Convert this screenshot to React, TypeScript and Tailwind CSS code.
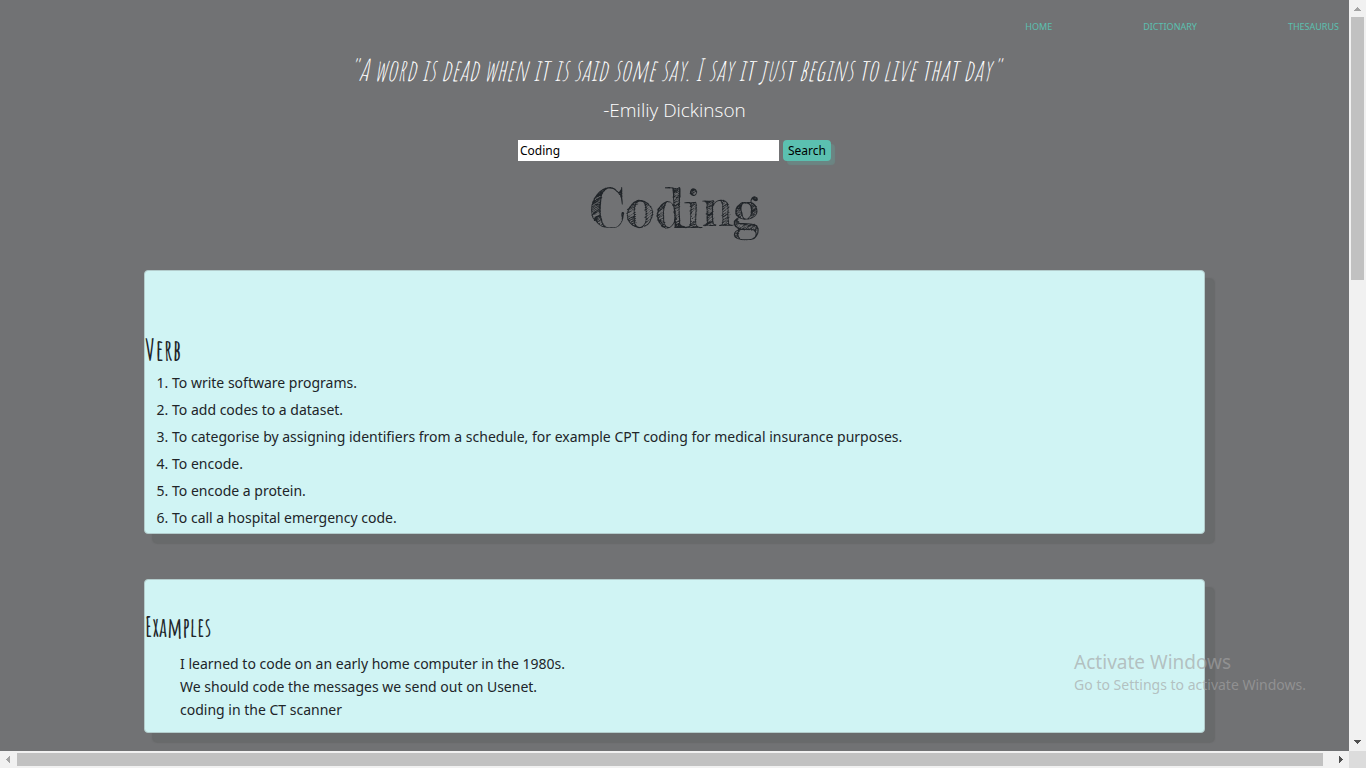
import React from "react";

const links = ["Home", "Dictionary", "Thesaurus"];

const definitions = [
  "To write software programs.",
  "To add codes to a dataset.",
  "To categorise by assigning identifiers from a schedule, for example CPT coding for medical insurance purposes.",
  "To encode.",
  "To encode a protein.",
  "To call a hospital emergency code.",
];

const examples = [
  "I learned to code on an early home computer in the 1980s.",
  "We should code the messages we send out on Usenet.",
  "coding in the CT scanner",
];

function Arrow({ points, className }: { points: string; className: string }) {
  return (
    <svg viewBox="0 0 17 17" className={`size-[17px] shrink-0 ${className}`} aria-hidden="true">
      <polygon points={points} fill="currentColor" shapeRendering="crispEdges" />
    </svg>
  );
}

function VerticalScrollbar() {
  return (
    <div className="flex flex-col bg-[#f1f1f1]" aria-hidden="true">
      <Arrow points="5,11 12,11 8.5,7" className="text-[#a3a3a3]" />
      <div className="min-h-0 flex-1 px-0.5">
        <div className="h-[36.7%] bg-[#c1c1c1]" />
      </div>
      <Arrow points="5,6 12,6 8.5,10" className="text-[#505050]" />
    </div>
  );
}

function HorizontalScrollbar() {
  return (
    <div className="flex bg-[#f1f1f1]" aria-hidden="true">
      <Arrow points="10,5 10,12 6,8.5" className="text-[#a3a3a3]" />
      <div className="min-w-0 flex-1 py-0.5">
        <div className="h-full w-[99.3%] bg-[#c1c1c1]" />
      </div>
      <Arrow points="7,5 7,12 11,8.5" className="text-[#505050]" />
    </div>
  );
}

const card =
  "rounded-[4px] border border-[#b3cccc] bg-[#d0f4f4] shadow-[9px_9px_1px_1px_rgba(95,97,97,0.5)]";
const display = "font-['Amatic_SC',Lato,sans-serif]";

export default function App() {
  return (
    <div className="relative grid h-screen grid-cols-[minmax(0,1fr)_17px] grid-rows-[minmax(0,1fr)_17px] bg-[#717274] font-['Noto_Sans','Open_Sans',sans-serif] text-[#212529]">
      <div className="overflow-hidden">
        <nav className="flex justify-end gap-[91px] pt-5 pr-2.5">
          {links.map((l) => (
            <a key={l} href="#" className="text-[9px] leading-[14px] text-[#5bc0b0] uppercase">
              {l}
            </a>
          ))}
        </nav>

        <header className="flex flex-col items-center pt-4 text-white">
          <h1 className={`${display} text-[30px] leading-10 whitespace-nowrap italic`}>
            "A word is dead when it is said some say. I say it just begins to live that day"
          </h1>
          <p className="pt-1.5 font-['Open_Sans',sans-serif] text-[19px] leading-7 font-light">
            -Emiliy Dickinson
          </p>
        </header>

        <form className="flex justify-center gap-1 pt-4" onSubmit={(e) => e.preventDefault()}>
          <input
            aria-label="Word"
            defaultValue="Coding"
            className="h-[21px] w-[261px] bg-white px-0.5 text-xs text-black"
          />
          <button className="h-[21px] rounded-[4px] bg-[#5bc0b0] px-[5px] text-xs text-black shadow-[4px_4px_1px_rgba(91,192,176,0.25)]">
            Search
          </button>
        </form>

        <h2 className="pt-3 text-center font-['Fredericka_the_Great','Liberation_Serif',serif] text-[53px] leading-[70px]">
          Coding
        </h2>

        <main className="flex flex-col gap-[45px] px-36 pt-[27px]">
          <section className={`${card} pt-[60px] pb-0.5`}>
            <h3 className={`${display} text-[30px] leading-[38px] font-bold`}>Verb</h3>
            <ol className="list-decimal pl-[27px] text-sm leading-[27px]">
              {definitions.map((d) => (
                <li key={d}>{d}</li>
              ))}
            </ol>
          </section>
          <section className={`${card} pt-7 pb-[11px]`}>
            <h3 className={`${display} text-[27px] leading-[38px] font-bold`}>Examples</h3>
            <ul className="pt-1.5 pl-[35px] text-sm leading-[23px]">
              {examples.map((e) => (
                <li key={e}>{e}</li>
              ))}
            </ul>
          </section>
        </main>
      </div>
      <VerticalScrollbar />
      <HorizontalScrollbar />
      <div className="bg-[#dcdcdc]" />

      <aside className="pointer-events-none absolute right-[60px] bottom-[73px] text-[#a3a3a3]/65">
        <p className="text-[19px] leading-6">Activate Windows</p>
        <p className="text-sm leading-[21px]">Go to Settings to activate Windows.</p>
      </aside>
    </div>
  );
}
